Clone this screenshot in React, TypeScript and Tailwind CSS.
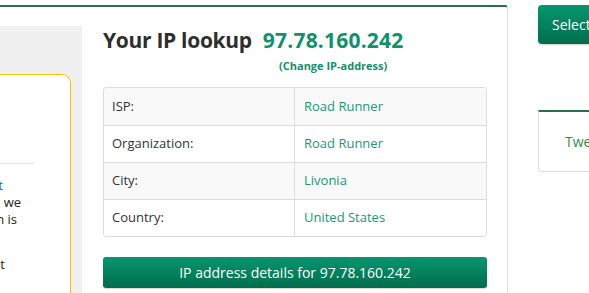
import React from "react";

const rows: [string, string][] = [
  ["ISP:", "Road Runner"],
  ["Organization:", "Road Runner"],
  ["City:", "Livonia"],
  ["Country:", "United States"],
];

function Line({ children, cls = "" }: { children: React.ReactNode; cls?: string }) {
  return (
    <div className={"flex justify-end whitespace-nowrap h-[17px] leading-[17px] " + cls}>
      <span>{children}</span>
    </div>
  );
}

export default function App() {
  return (
    <div
      className="w-[589px] h-[293px] overflow-hidden bg-white flex"
      style={{ fontFamily: '"Open Sans", "Noto Sans", sans-serif' }}
    >
      {/* main card */}
      <div className="w-[508px] shrink-0 pt-[5px] h-full">
        <div className="h-[300px] border-t-2 border-r border-t-[#2c6d46] border-r-[#e3e3e3] rounded-tr-[3px] flex">
          {/* left panel */}
          <div className="w-[82px] shrink-0 mt-[19px] bg-[#f0f0f0] flex flex-col">
            <div className="mt-[48px] w-[71px] flex-1 bg-white border border-l-0 border-b-0 border-[#f5c200] rounded-tr-[9px] overflow-hidden">
              <div className="mt-[88px] w-[34px] h-px bg-[#e3e3e3]" />
              <div className="w-[21px] mt-[13px] text-[13px] text-[#222]">
                <div className="w-[3px]">
                  <Line cls="text-[#1a5fb4]">information about that</Line>
                </div>
                <Line>we know about you that we</Line>
                <div className="w-[17px]">
                  <Line>this information is</Line>
                </div>
                <div className="h-[11px]" />
                <div className="w-[5px] mt-[17px]">
                  <Line>you can see it at</Line>
                </div>
              </div>
            </div>
          </div>

          {/* content */}
          <div className="ml-[21px] w-[384px] pt-[18px]">
            <div className="flex items-start">
              <h1 className="text-[21px] leading-[30px] font-bold tracking-[-0.3px] text-[#2e2e2e] whitespace-nowrap">
                Your IP lookup
              </h1>
              <div className="ml-[11px] flex flex-col items-center">
                <div className="text-[21px] leading-[30px] font-bold tracking-[0.2px] text-[#11906d] whitespace-nowrap">
                  97.78.160.242
                </div>
                <a className="mt-[3px] text-[11px] leading-[16px] font-bold text-[#11906d] whitespace-nowrap">
                  (Change IP-address)
                </a>
              </div>
            </div>

            <div className="mt-[13px] border border-[#dddddd] rounded-[3px] overflow-hidden">
              {rows.map(([k, v], i) => (
                <div
                  key={k}
                  className={
                    "flex h-[37px] text-[13px] " +
                    (i > 0 ? "border-t border-[#dddddd] " : "h-[36px] ") +
                    (i % 2 === 0 ? "bg-[#f9f9f9]" : "bg-white")
                  }
                >
                  <div className="w-[191px] border-r border-[#dddddd] pl-[8px] flex items-center text-[#333]">
                    {k}
                  </div>
                  <div className="flex-1 pl-[9px] flex items-center text-[#1a9878]">{v}</div>
                </div>
              ))}
            </div>

            <button className="mt-[20px] w-full h-[31px] rounded-[3px] bg-gradient-to-b from-[#06966f] to-[#036d4d] text-white text-[14px] flex items-center justify-center shadow-[0_1px_1px_rgba(0,0,0,0.15)]">
              IP address details for 97.78.160.242
            </button>
          </div>
        </div>
      </div>

      {/* sidebar */}
      <div className="ml-[30px] pt-[5px] flex flex-col shrink-0 w-[140px]">
        <button className="h-[39px] w-full rounded-[4px] bg-gradient-to-b from-[#06966f] to-[#036d4d] text-white text-[14px] text-left pl-[14px] shadow-[0_1px_2px_rgba(0,0,0,0.2)]">
          Select language
        </button>
        <div className="mt-[66px] h-[62px] border border-t-2 border-[#e0e0e0] border-t-[#2c6d46] rounded-bl-[4px] flex items-center pl-[26px]">
          <span className="text-[14px] text-[#2f8c45] whitespace-nowrap">Tweet this page</span>
        </div>
      </div>
    </div>
  );
}
